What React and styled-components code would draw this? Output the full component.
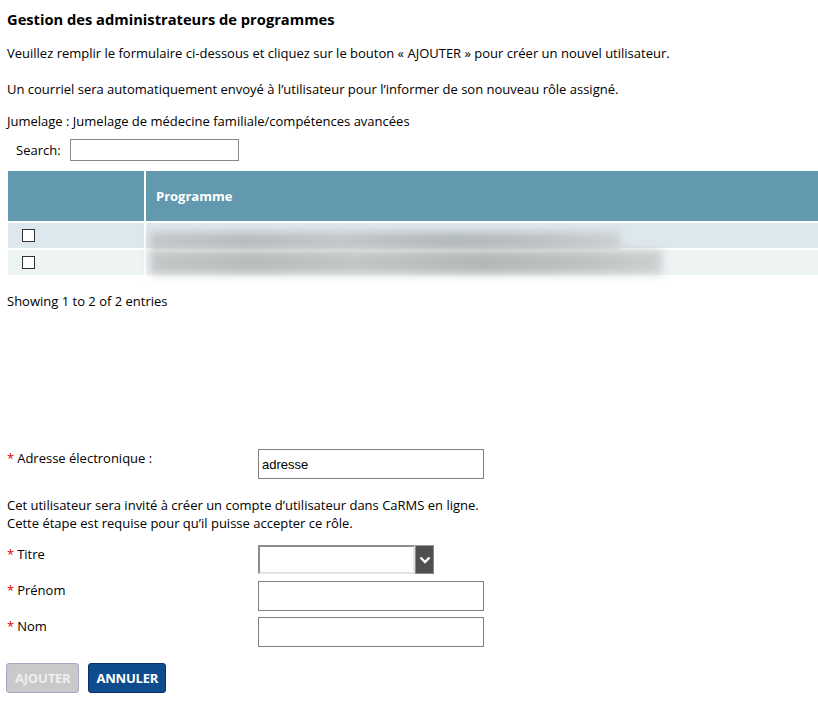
import React from "react";
import styled, { createGlobalStyle } from "styled-components";

const Global = createGlobalStyle`
  html, body { margin: 0; padding: 0; background: #fff; }
  body { font-family: "Open Sans", "Noto Sans", sans-serif; font-size: 13px; color: #000; }
  * { box-sizing: border-box; }
`;

const Page = styled.div`
  width: 818px;
  overflow: hidden;
  padding: 9px 0 20px 0;
`;

const Title = styled.h2`
  margin: 0 0 15px 7px;
  font-size: 14.7px;
  line-height: 20px;
  font-weight: 700;
`;

const Para = styled.p`
  margin: 0 0 ${(p) => p.$mb || 18}px 7px;
  line-height: 18px;
`;

const SearchRow = styled.div`
  display: flex;
  align-items: center;
  gap: 9px;
  margin: 0 0 10px 16px;
  height: 22px;
`;

const SearchInput = styled.input`
  width: 169px;
  height: 22px;
  border: 1px solid #8a8a8a;
  padding: 0 3px;
  font-size: 13px;
`;

const Table = styled.table`
  border-collapse: separate;
  border-spacing: 2px;
  margin: -2px 0 0 6px;
  width: 814px;
  table-layout: fixed;
`;

const HeadCell = styled.th`
  background: #6299ae;
  color: #fff;
  height: 50px;
  padding: 0 0 0 10px;
  text-align: left;
  font-weight: 700;
  font-size: 13px;
  width: ${(p) => p.$w || "auto"};
`;

const Cell = styled.td`
  background: ${(p) => (p.$alt ? "#eef3f4" : "#dde8ee")};
  height: 25px;
  padding: 0;
  position: relative;
  vertical-align: middle;
`;

const Check = styled.span`
  display: block;
  width: 13px;
  height: 13px;
  border: 1px solid #333;
  background: #fff;
  margin-left: 14px;
`;

const Blur = styled.div`
  position: absolute;
  left: 4px;
  top: ${(p) => p.$top}px;
  width: ${(p) => p.$w}px;
  height: ${(p) => p.$h}px;
  background: linear-gradient(90deg, #c4c7c8 0%, #b8bcbd 20%, #c3c6c7 40%, #b3b7b8 65%, #bfc2c3 85%, #cdd0d1 100%);
  filter: blur(4px);
`;

const Info = styled.div`
  margin: 15px 0 0 7px;
  line-height: 18px;
`;

const Form = styled.div`
  margin-top: 139px;
  padding-left: 7px;
`;

const FormRow = styled.div`
  display: flex;
  align-items: flex-start;
  margin-bottom: ${(p) => p.$mb ?? 6}px;
`;

const Label = styled.label`
  width: 251px;
  line-height: 18px;
`;

const Star = styled.span`
  color: #e00000;
  margin-right: 3px;
`;

const TextInput = styled.input`
  width: 226px;
  height: 30px;
  border: 1px solid #7f7f7f;
  padding: 0 3px;
  font-family: "Liberation Sans", Arial, sans-serif;
  font-size: 13px;
  color: #000;
  outline: none;
`;

const SelectWrap = styled.div`
  display: flex;
  width: 176px;
  height: 29px;
`;

const SelectField = styled.div`
  flex: 1;
  background: #fff;
  border-top: 2px solid #8c8c8c;
  border-left: 2px solid #8c8c8c;
  border-bottom: 2px solid #e3e3e3;
  border-right: 2px solid #e3e3e3;
`;

const Arrow = styled.div`
  width: 19px;
  background: #4f4f4f;
  border: 1px solid #8a8a8a;
  border-top-color: #9a9a9a;
  display: flex;
  align-items: center;
  justify-content: center;
`;

const Buttons = styled.div`
  display: flex;
  gap: 9px;
  margin-top: 16px;
  margin-left: -1px;
`;

const Button = styled.button`
  height: 30px;
  padding: 0 ${(p) => (p.$primary ? 7 : 8)}px;
  border-radius: 3px;
  font-family: "Open Sans", sans-serif;
  font-weight: 700;
  font-size: 13px;
  letter-spacing: -0.2px;
  background: ${(p) => (p.$primary ? "#0f4c8e" : "#c9c9c9")};
  color: ${(p) => (p.$primary ? "#fff" : "#eeeeee")};
  border: 1px solid ${(p) => (p.$primary ? "#0b2f66" : "#aaa8c6")};
`;

export default function App() {
  return (
    <>
      <Global />
      <Page>
        <Title>Gestion des administrateurs de programmes</Title>
        <Para>
          Veuillez remplir le formulaire ci-dessous et cliquez sur le bouton « AJOUTER » pour créer un nouvel utilisateur.
        </Para>
        <Para $mb={14}>
          Un courriel sera automatiquement envoyé à l’utilisateur pour l’informer de son nouveau rôle assigné.
        </Para>
        <Para $mb={9}>Jumelage : Jumelage de médecine familiale/compétences avancées</Para>
        <SearchRow>
          <span>Search:</span>
          <SearchInput type="text" />
        </SearchRow>
        <Table>
          <thead>
            <tr>
              <HeadCell $w="136px"></HeadCell>
              <HeadCell>Programme</HeadCell>
            </tr>
          </thead>
          <tbody>
            <tr>
              <Cell>
                <Check />
              </Cell>
              <Cell>
                <Blur $top={9} $w={470} $h={18} />
              </Cell>
            </tr>
            <tr>
              <Cell $alt>
                <Check />
              </Cell>
              <Cell $alt>
                <Blur $top={0} $w={512} $h={24} />
              </Cell>
            </tr>
          </tbody>
        </Table>
        <Info>Showing 1 to 2 of 2 entries</Info>
        <Form>
          <FormRow $mb={17}>
            <Label>
              <Star>*</Star>Adresse électronique :
            </Label>
            <TextInput type="text" defaultValue="adresse" />
          </FormRow>
          <Info style={{ margin: "0 0 13px 0" }}>
            Cet utilisateur sera invité à créer un compte d’utilisateur dans CaRMS en ligne.
            <br />
            Cette étape est requise pour qu’il puisse accepter ce rôle.
          </Info>
          <FormRow $mb={7}>
            <Label>
              <Star>*</Star>Titre
            </Label>
            <SelectWrap>
              <SelectField />
              <Arrow>
                <svg width="12" height="8" viewBox="0 0 12 8">
                  <path d="M1.5 1.5 L6 6 L10.5 1.5" fill="none" stroke="#fff" strokeWidth="2.4" />
                </svg>
              </Arrow>
            </SelectWrap>
          </FormRow>
          <FormRow>
            <Label>
              <Star>*</Star>Prénom
            </Label>
            <TextInput type="text" />
          </FormRow>
          <FormRow $mb={0}>
            <Label>
              <Star>*</Star>Nom
            </Label>
            <TextInput type="text" />
          </FormRow>
          <Buttons>
            <Button disabled>AJOUTER</Button>
            <Button $primary>ANNULER</Button>
          </Buttons>
        </Form>
      </Page>
    </>
  );
}
